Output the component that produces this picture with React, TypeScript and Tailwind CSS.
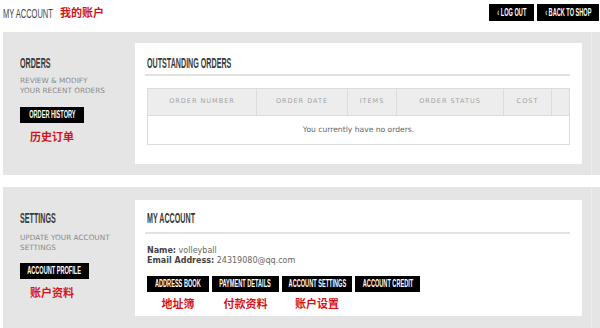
import React from "react";

const cjk = "font-['Noto_Sans_CJK_SC',sans-serif]";
const verd = "font-['DejaVu_Sans',sans-serif]";

// condensed display text: Liberation Sans squeezed horizontally
function Cond({ text, className = "", center = false }: { text: string; className?: string; center?: boolean }) {
  return (
    <span
      className={`inline-block whitespace-nowrap font-['Liberation_Sans',sans-serif] ${center ? "origin-center" : "origin-left"} ${className}`}
    >
      {text}
    </span>
  );
}

function BlackButton({ label, className = "" }: { label: string; className?: string }) {
  return (
    <div className={`bg-black text-white flex items-center justify-center h-[16px] ${className}`}>
      <Cond text={label} center className="text-[10px] font-bold leading-none scale-x-[0.56]" />
    </div>
  );
}

function RedNote({ text, className = "" }: { text: string; className?: string }) {
  return <div className={`${cjk} text-[11px] font-bold text-[#d3141b] leading-[11px] whitespace-nowrap ${className}`}>{text}</div>;
}

function Heading({ text }: { text: string }) {
  return (
    <div className="h-[14px] leading-[14px]">
      <Cond text={text} className="text-[14px] font-bold text-[#3a3a3a] scale-x-[0.51]" />
    </div>
  );
}

const columns = [
  { label: "ORDER NUMBER", w: "w-[109px]" },
  { label: "ORDER DATE", w: "w-[91px]" },
  { label: "ITEMS", w: "w-[49px]" },
  { label: "ORDER STATUS", w: "w-[107px]" },
  { label: "COST", w: "w-[48px]" },
  { label: "", w: "flex-1" },
];

export default function App() {
  return (
    <div className="w-[600px] h-[328px] bg-white overflow-hidden font-['Liberation_Sans',sans-serif]">
      {/* header */}
      <div className="h-[32px] flex items-start justify-between pl-[3px] pr-[1px]">
        <div className="flex items-center h-[25px]">
          <div className="w-[57px]">
            <Cond text="MY ACCOUNT" className="text-[12.5px] text-[#444] scale-x-[0.6]" />
          </div>
          <span className={`${cjk} text-[11px] font-bold text-[#d3141b]`}>我的账户</span>
        </div>
        <div className="flex gap-[3px] pt-[4px]">
          <BlackButton label="‹ LOG OUT" className="w-[45px] h-[17px]" />
          <BlackButton label="‹ BACK TO SHOP" className="w-[62px] h-[17px]" />
        </div>
      </div>

      {/* orders */}
      <div className="flex ml-[3px] h-[143px] bg-[#e5e5e5]">
        <div className="w-[132px] pl-[17px] pt-[24px]">
          <Heading text="ORDERS" />
          <div className={`${verd} mt-[6px] text-[7.3px] text-[#8a8a8a] leading-[10px]`}>
            REVIEW &amp; MODIFY
            <br />
            YOUR RECENT ORDERS
          </div>
          <BlackButton label="ORDER HISTORY" className="w-[64px] mt-[11px]" />
          <RedNote text="历史订单" className="mt-[8px] ml-[10px]" />
        </div>
        <div className="mt-[11px] w-[447px] h-[121px] bg-white pl-[10px] pt-[13px]">
          <div className="pl-[2px]">
            <Heading text="OUTSTANDING ORDERS" />
          </div>
          <div className="mt-[4px] h-[2px] bg-[#e2e2e2] w-[425px]" />
          <div className="mt-[12px] ml-[2px] border border-[#dcdcdc] w-[423px]">
            <div className="flex h-[27px] bg-[#ededed] border-b border-[#dcdcdc]">
              {columns.map((c, i) => (
                <div
                  key={i}
                  className={`${c.w} ${i < columns.length - 1 ? "border-r border-[#dcdcdc]" : ""} flex items-center justify-center ${verd} text-[6.5px] tracking-[1px] text-[#a3a3a3]`}
                >
                  {c.label}
                </div>
              ))}
            </div>
            <div className={`h-[28px] flex items-center justify-center text-[7.6px] text-[#666] ${verd}`}>
              You currently have no orders.
            </div>
          </div>
        </div>
        <div className="ml-[9px] w-[1px] bg-[#ededed]" />
      </div>

      <div className="h-[12px]" />

      {/* settings */}
      <div className="flex ml-[3px] h-[141px] bg-[#e5e5e5]">
        <div className="w-[132px] pl-[17px] pt-[24px]">
          <Heading text="SETTINGS" />
          <div className={`${verd} mt-[8px] text-[7.3px] text-[#8a8a8a] leading-[10px]`}>
            UPDATE YOUR ACCOUNT
            <br />
            SETTINGS
          </div>
          <BlackButton label="ACCOUNT PROFILE" className="w-[69px] mt-[10px]" />
          <RedNote text="账户资料" className="mt-[8px] ml-[10px]" />
        </div>
        <div className="mt-[13px] w-[447px] h-[116px] bg-white pl-[10px] pt-[11px]">
          <div className="pl-[2px]">
            <Heading text="MY ACCOUNT" />
          </div>
          <div className="mt-[7px] h-[2px] bg-[#e2e2e2] w-[425px]" />
          <div className={`ml-[2px] mt-[12px] text-[8px] text-[#666] leading-[10px] ${verd}`}>
            <div>
              <span className="font-bold text-[#444]">Name:</span> volleyball
            </div>
            <div>
              <span className="font-bold text-[#444]">Email Address:</span> 24319080@qq.com
            </div>
          </div>
          <div className="ml-[2px] flex gap-[3px] mt-[10px]">
            <div className="flex flex-col items-center">
              <BlackButton label="ADDRESS BOOK" className="w-[62px]" />
              <RedNote text="地址簿" className="mt-[6px]" />
            </div>
            <div className="flex flex-col items-center">
              <BlackButton label="PAYMENT DETAILS" className="w-[67px]" />
              <RedNote text="付款资料" className="mt-[6px]" />
            </div>
            <div className="flex flex-col items-center">
              <BlackButton label="ACCOUNT SETTINGS" className="w-[70px]" />
              <RedNote text="账户设置" className="mt-[6px]" />
            </div>
            <div className="flex flex-col items-center">
              <BlackButton label="ACCOUNT CREDIT" className="w-[65px]" />
            </div>
          </div>
        </div>
        <div className="ml-[9px] w-[1px] bg-[#ededed]" />
      </div>
    </div>
  );
}
